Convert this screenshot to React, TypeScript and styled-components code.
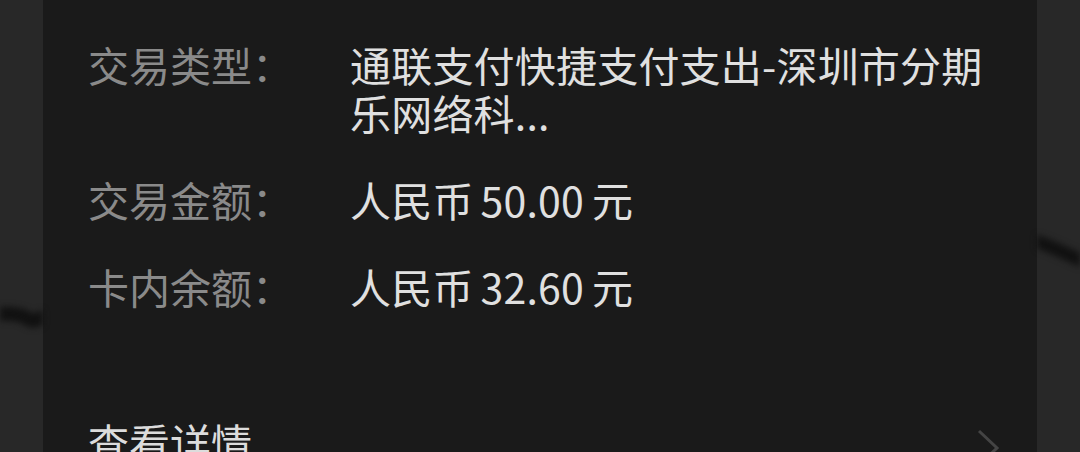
import React from 'react';
import styled, { createGlobalStyle } from 'styled-components';

const GlobalStyle = createGlobalStyle`
  html, body {
    margin: 0;
    padding: 0;
    background: #282828;
    overflow: hidden;
  }
  body {
    font-family: "Noto Sans CJK SC", "Noto Sans", sans-serif;
  }
`;

const Page = styled.div`
  display: flex;
  width: 1080px;
  height: 452px;
  background: #282828;
  overflow: hidden;
`;

const Gutter = styled.div<{ $width: number }>`
  flex: 0 0 ${(p) => p.$width}px;
  height: 100%;
  display: flex;
  filter: blur(3px);
`;

const Card = styled.div`
  flex: 0 0 994px;
  box-sizing: border-box;
  height: 100%;
  background: #1a1a1a;
  padding: 40px 43px 0 43px;
  display: flex;
  flex-direction: column;
`;

const Row = styled.div`
  display: flex;
  font-size: 41px;
  line-height: 48px;
  margin-bottom: 39px;

  &:last-of-type {
    margin-bottom: 0;
  }
`;

const Label = styled.div`
  flex: 0 0 264px;
  padding-left: 2px;
  box-sizing: border-box;
  color: #8a8a8a;
`;

const Value = styled.div`
  flex: 1;
  color: #e0e0e0;
  word-break: break-all;
  letter-spacing: 0.2px;
`;

const Num = styled.span`
  margin: 0 8px 0 7px;
`;

const Rows = styled.div`
  display: flex;
  flex-direction: column;
`;

const Divider = styled.div`
  height: 2px;
  background: #262626;
  margin-top: 67px;
`;

const DetailLink = styled.div`
  display: flex;
  align-items: center;
  justify-content: space-between;
  margin-top: 36px;
  font-size: 41px;
  line-height: 48px;
  color: #dcdcdc;
  padding-left: 2px;
`;

const Chevron = styled.svg`
  width: 24px;
  height: 40px;
  margin-right: -6px;
  margin-top: 16px;
`;

interface Item {
  label: string;
  value: React.ReactNode;
}

const items: Item[] = [
  { label: '交易类型：', value: '通联支付快捷支付支出-深圳市分期乐网络科...' },
  { label: '交易金额：', value: <>人民币<Num>50.00</Num>元</> },
  { label: '卡内余额：', value: <>人民币<Num>32.60</Num>元</> },
];

export default function App() {
  return (
    <>
      <GlobalStyle />
      <Page>
        <Gutter $width={43}>
          <svg width="43" height="452" viewBox="0 0 43 452">
            <path d="M-5 314 C 10 313, 20 314, 27 318 C 33 323, 37 320, 45 316" stroke="#111111" strokeWidth="14" fill="none" />
          </svg>
        </Gutter>
        <Card>
          <Rows>
            {items.map((item) => (
              <Row key={item.label}>
                <Label>{item.label}</Label>
                <Value>{item.value}</Value>
              </Row>
            ))}
          </Rows>
          <Divider />
          <DetailLink>
            <span>查看详情</span>
            <Chevron viewBox="0 0 24 40">
              <path d="M3 2 L21 19 L3 36" stroke="#444444" strokeWidth="3" fill="none" />
            </Chevron>
          </DetailLink>
        </Card>
        <Gutter $width={43}>
          <svg width="43" height="452" viewBox="0 0 43 452">
            <path d="M-5 240 C 10 244, 25 252, 48 262" stroke="#111111" strokeWidth="13" fill="none" />
          </svg>
        </Gutter>
      </Page>
    </>
  );
}
